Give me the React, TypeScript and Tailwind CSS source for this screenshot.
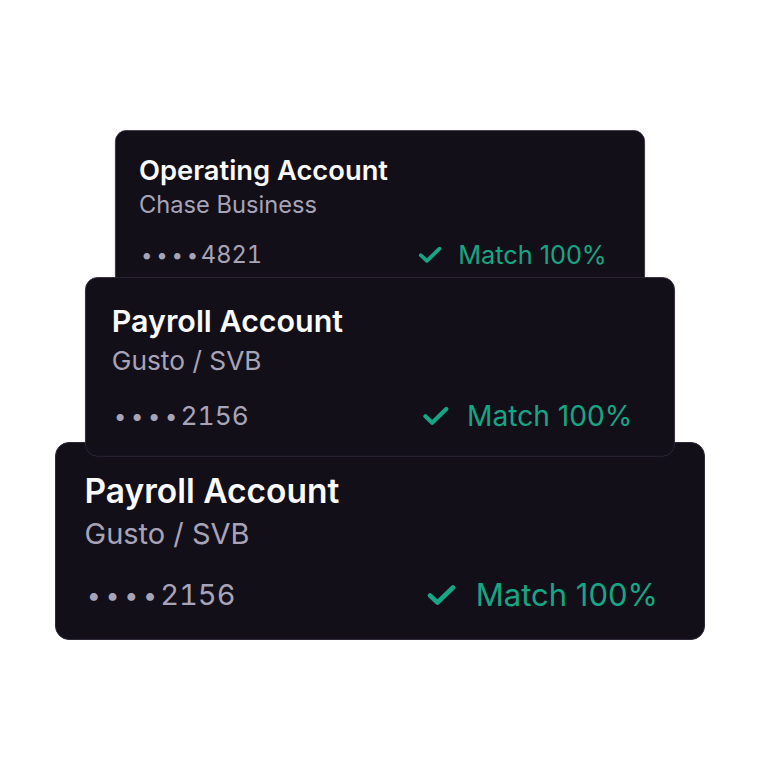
import React from "react";

type Account = {
  name: string;
  bank: string;
  last4: string;
  match: string;
};

const accounts: { acc: Account; cls: string }[] = [
  {
    acc: { name: "Operating Account", bank: "Chase Business", last4: "4821", match: "Match 100%" },
    cls: "scale-[0.8154]",
  },
  {
    acc: { name: "Payroll Account", bank: "Gusto / SVB", last4: "2156", match: "Match 100%" },
    cls: "scale-[0.9077] -mt-[51px]",
  },
  {
    acc: { name: "Payroll Account", bank: "Gusto / SVB", last4: "2156", match: "Match 100%" },
    cls: "-mt-[33px]",
  },
];

function CheckIcon() {
  return (
    <svg width="30" height="22" viewBox="0 0 30 22" fill="none" className="shrink-0">
      <path
        d="M4 11.5 L11.5 18.5 L27 3.5"
        stroke="currentColor"
        strokeWidth="4.6"
        strokeLinecap="round"
        strokeLinejoin="round"
      />
    </svg>
  );
}

function AccountCard({ acc, cls }: { acc: Account; cls: string }) {
  return (
    <div
      className={
        "w-[650px] h-[198px] shrink-0 origin-top rounded-[14px] border-[1.5px] border-[#2e2839] bg-[#130f18] pl-[28.5px] pr-[46px] pt-[27.5px] pb-[26.5px] flex flex-col " +
        cls
      }
    >
      <div className="text-[33.5px] leading-[40px] font-semibold text-[#fbfafc]">{acc.name}</div>
      <div className="text-[29px] leading-[34px] text-[#a8a4b8] mt-[6.5px]">{acc.bank}</div>
      <div className="mt-auto flex items-center justify-between">
        <div className="flex items-center text-[29px] leading-[36px] text-[#a8a4b8] tabular-nums">
          {[0, 1, 2, 3].map((i) => (
            <span key={i} className="w-[18.7px] text-center text-[25px]">
              •
            </span>
          ))}
          <span className="ml-[1px]">{acc.last4}</span>
        </div>
        <div className="flex items-center gap-[20px] text-[31px] leading-[36px] text-[#17a685]">
          <CheckIcon />
          <span>{acc.match}</span>
        </div>
      </div>
    </div>
  );
}

export default function App() {
  return (
    <div
      className="min-h-[760px] w-full bg-white flex flex-col items-center pt-[130px]"
      style={{ fontFamily: "Inter, 'Noto Sans', sans-serif" }}
    >
      {accounts.map((a, i) => (
        <AccountCard key={i} acc={a.acc} cls={a.cls} />
      ))}
    </div>
  );
}
